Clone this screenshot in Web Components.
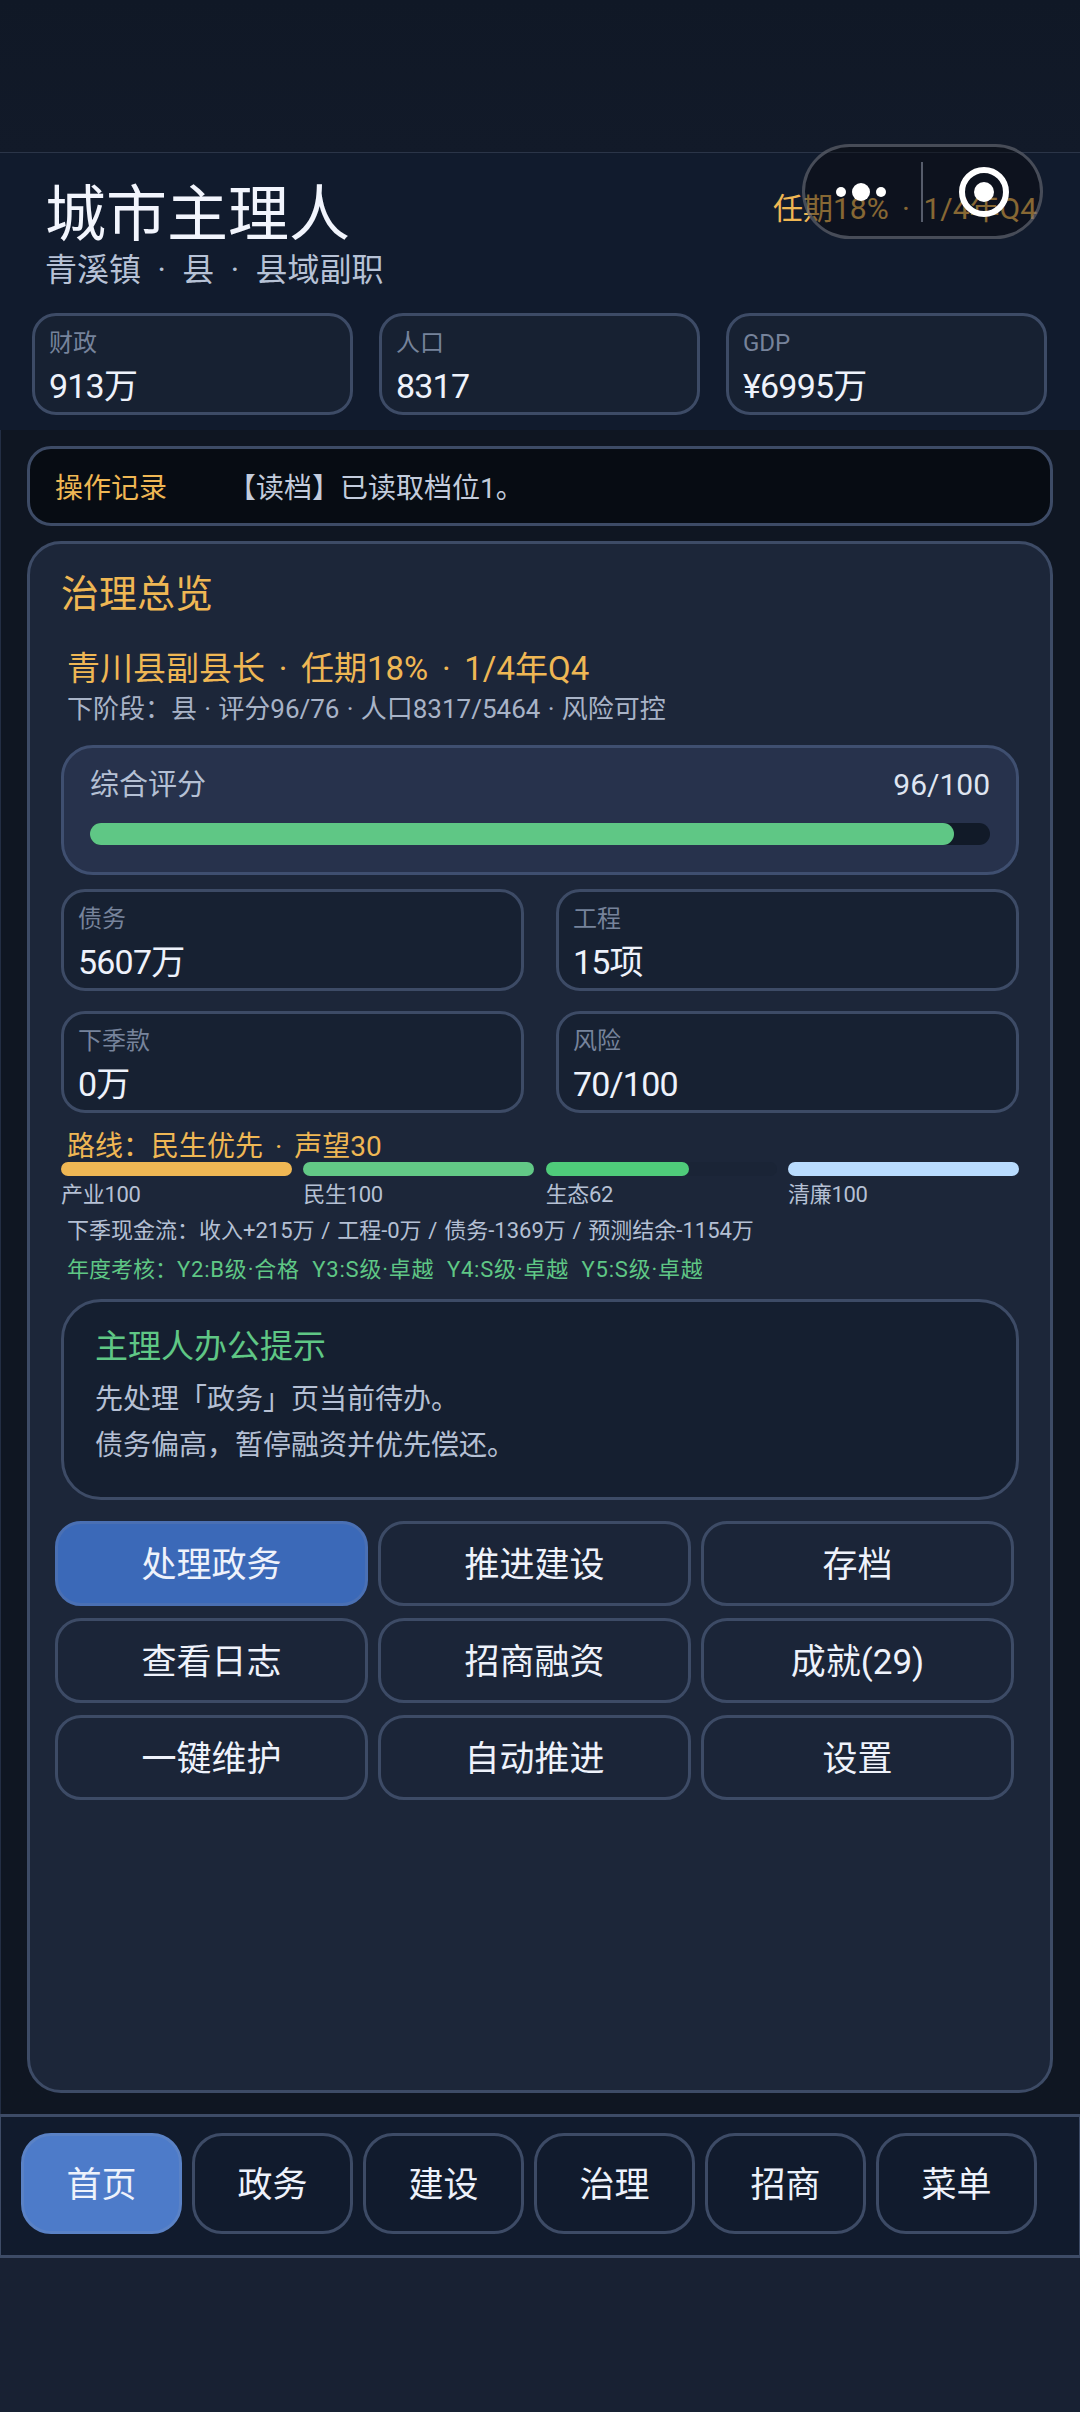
<!DOCTYPE html>
<html lang="zh">
<head>
<meta charset="utf-8">
<title>城市主理人</title>
<style>
  html, body { margin: 0; padding: 0; }
  body {
    width: 1080px;
    height: 2412px;
    display: flex;
    flex-direction: column;
    overflow: hidden;
    background: #182133;
    color: #eef2fb;
    font-family: Roboto, "Noto Sans CJK SC", sans-serif;
  }
</style>
</head>
<body>
<city-app></city-app>
<script>
  // small base class: every element just renders its css + markup into an open shadow root
  class Base extends HTMLElement {
    constructor() {
      super()
      this.attachShadow({ mode: 'open' })
      const template = document.createElement('template')
      template.innerHTML = `<style>${this.constructor.css}</style>${this.render()}`
      this.shadowRoot.appendChild(template.content.cloneNode(true))
    }
    render() { return '<slot></slot>' }
    attr(name) { return this.getAttribute(name) || '' }
  }

  customElements.define('stat-card', class extends Base {
    static css = `
      :host {
        display: block;
        box-sizing: border-box;
        height: 102px;
        padding: 12px 13px 0 14px;
        border: 3px solid #3d4b66;
        border-radius: 24px;
        background: #172132;
      }
      .label { font-size: 24px; line-height: 30px; color: #76839b; }
      .value { margin-top: 8px; font-size: 34px; line-height: 40px; color: #eef2fb; letter-spacing: -.8px; }
    `
    render() {
      return `<div class="label">${this.attr('label')}</div><div class="value">${this.attr('value')}</div>`
    }
  })

  customElements.define('capsule-menu', class extends Base {
    static css = `
      :host {
        position: absolute;
        top: 144px;
        left: 802px;
        box-sizing: border-box;
        width: 241px;
        height: 95px;
        display: flex;
        align-items: center;
        border: 3px solid rgba(130, 134, 146, .5);
        border-radius: 48px;
        background: rgba(8, 8, 14, .45);
      }
      svg { display: block; }
    `
    render() {
      return `<svg width="235" height="89" viewBox="0 0 235 89">
        <circle cx="36" cy="45" r="5" fill="#fff"/>
        <circle cx="56" cy="45" r="9" fill="#fff"/>
        <circle cx="76" cy="45" r="5" fill="#fff"/>
        <rect x="116" y="15" width="2" height="60" fill="#565c6b"/>
        <circle cx="179" cy="45" r="22" fill="none" stroke="#fff" stroke-width="6"/>
        <circle cx="179" cy="45" r="10" fill="#fff"/>
      </svg>`
    }
  })

  customElements.define('app-header', class extends Base {
    static css = `
      :host {
        display: block;
        box-sizing: border-box;
        height: 278px;
        padding: 32px 32px 0;
        border-top: 1px solid #2b3548;
        background: #111b2d;
      }
      .top { display: flex; justify-content: space-between; align-items: flex-start; padding: 0 11px 0 13px; }
      h1 { margin: 0; font-size: 61px; line-height: 60px; font-weight: 400; color: #f2f5fd; }
      .sub { margin-top: 7px; font-size: 32px; line-height: 36px; color: #b7c2d6; word-spacing: 8.5px; }
      .term { margin-top: 4px; font-size: 30px; line-height: 40px; color: #efb754; word-spacing: 6px; }
      .stats { display: grid; grid-template-columns: repeat(3, 321px); gap: 26px; margin-top: 25px; }
    `
    render() {
      return `
        <div class="top">
          <div>
            <h1>城市主理人</h1>
            <div class="sub">青溪镇 · 县 · 县域副职</div>
          </div>
          <div class="term">任期18% · 1/4年Q4</div>
        </div>
        <div class="stats">
          <stat-card label="财政" value="913万"></stat-card>
          <stat-card label="人口" value="8317"></stat-card>
          <stat-card label="GDP" value="¥6995万"></stat-card>
        </div>`
    }
  })

  customElements.define('log-bar', class extends Base {
    static css = `
      :host {
        display: flex;
        align-items: center;
        box-sizing: border-box;
        height: 80px;
        padding-left: 25px;
        border: 3px solid #3d4b66;
        border-radius: 24px;
        background: #070c13;
        font-size: 28px;
      }
      .label { width: 173px; color: #efb754; }
      .msg { color: #c3ccdc; }
    `
    render() {
      return `<span class="label">操作记录</span><span class="msg">【读档】已读取档位1。</span>`
    }
  })

  customElements.define('score-box', class extends Base {
    static css = `
      :host {
        display: block;
        box-sizing: border-box;
        height: 130px;
        padding: 19px 26px 0 26px;
        border: 3px solid #3f4f70;
        border-radius: 32px;
        background: #27324c;
      }
      .row { display: flex; justify-content: space-between; font-size: 29px; line-height: 36px; color: #b5c0d4; }
      .num { color: #dfe5f1; font-size: 30px; }
      .track { margin-top: 20px; height: 22px; border-radius: 11px; background: #111a28; }
      .fill { width: 96%; height: 100%; border-radius: 11px; background: #5fc785; }
    `
    render() {
      return `
        <div class="row"><span>综合评分</span><span class="num">96/100</span></div>
        <div class="track"><div class="fill"></div></div>`
    }
  })

  customElements.define('meter-bar', class extends Base {
    static css = `
      :host { display: block; }
      .track { height: 14px; border-radius: 7px; background: #1a2436; }
      .fill { height: 100%; border-radius: 7px; }
      .label { margin-top: 6px; font-size: 22px; line-height: 26px; color: #b5c0d4; letter-spacing: -.3px; }
    `
    render() {
      return `
        <div class="track"><div class="fill" style="width:${this.attr('pct')}%;background:${this.attr('color')}"></div></div>
        <div class="label">${this.attr('label')}</div>`
    }
  })

  customElements.define('hint-box', class extends Base {
    static css = `
      :host {
        display: block;
        box-sizing: border-box;
        height: 201px;
        padding: 25px 31px 0;
        border: 3px solid #3d4b66;
        border-radius: 40px;
        background: #151f30;
      }
      h3 { margin: 0 0 10px; font-size: 33px; line-height: 40px; font-weight: 400; color: #5fc785; }
      p { margin: 0; font-size: 28px; line-height: 46px; color: #b5c0d4; }
    `
    render() {
      return `<h3>主理人办公提示</h3><p>先处理「政务」页当前待办。</p><p>债务偏高，暂停融资并优先偿还。</p>`
    }
  })

  customElements.define('action-button', class extends Base {
    static css = `
      :host {
        display: flex;
        align-items: center;
        justify-content: center;
        box-sizing: border-box;
        height: var(--btn-height, 85px);
        padding-bottom: 5px;
        border: 3px solid #3d4b66;
        border-radius: var(--btn-radius, 26px);
        background: var(--btn-bg, #1b2538);
        font-size: 35px;
        color: #eef2fb;
      }
      :host([primary]) { background: var(--btn-active, #3b69b8); border-color: var(--btn-active-border, #4a70b4); }
    `
  })

  customElements.define('overview-panel', class extends Base {
    static css = `
      :host {
        display: block;
        flex: 1;
        box-sizing: border-box;
        padding: 28px 31px 0;
        border: 3px solid #3d4b66;
        border-radius: 34px;
        background: #1c2639;
      }
      h2 { margin: 0; font-size: 38px; line-height: 44px; font-weight: 400; color: #efb754; }
      .role { margin-top: 33px; padding-left: 6px; font-size: 33px; line-height: 40px; color: #efb754; word-spacing: 5.5px; }
      .next { margin-top: 4px; padding-left: 6px; font-size: 26px; line-height: 32px; color: #a8b3c7; word-spacing: .8px; }
      score-box { margin-top: 20px; }
      .stats { display: grid; grid-template-columns: 1fr 1fr; gap: 20px 32px; margin-top: 14px; }
      .route { margin-top: 19px; padding-left: 6px; font-size: 28px; line-height: 30px; color: #efb754; word-spacing: 5px; }
      .meters { display: grid; grid-template-columns: repeat(4, 231px); justify-content: space-between; }
      .flow { margin-top: 8px; padding-left: 6px; font-size: 22px; line-height: 30px; color: #b5c0d4; word-spacing: 1.3px; white-space: nowrap; }
      .year { margin-top: 9px; padding-left: 6px; font-size: 22px; line-height: 30px; color: #5fc785; white-space: nowrap; }
      .year span { letter-spacing: .8px; }
      hint-box { margin-top: 14px; }
      .actions { display: grid; grid-template-columns: repeat(3, 313px); gap: 12px 10px; margin: 21px 0 0 -6px; }
    `
    render() {
      const actions = ['处理政务', '推进建设', '存档', '查看日志', '招商融资', '成就(29)', '一键维护', '自动推进', '设置']
      return `
        <h2>治理总览</h2>
        <div class="role">青川县副县长 · 任期18% · 1/4年Q4</div>
        <div class="next">下阶段：县 · 评分96/76 · 人口8317/5464 · 风险可控</div>
        <score-box></score-box>
        <div class="stats">
          <stat-card label="债务" value="5607万"></stat-card>
          <stat-card label="工程" value="15项"></stat-card>
          <stat-card label="下季款" value="0万"></stat-card>
          <stat-card label="风险" value="70/100"></stat-card>
        </div>
        <div class="route">路线：民生优先 · 声望30</div>
        <div class="meters">
          <meter-bar label="产业100" pct="100" color="#efb754"></meter-bar>
          <meter-bar label="民生100" pct="100" color="#62c886"></meter-bar>
          <meter-bar label="生态62" pct="62" color="#4fcb7a"></meter-bar>
          <meter-bar label="清廉100" pct="100" color="#b9dcff"></meter-bar>
        </div>
        <div class="flow">下季现金流：收入+215万 / 工程-0万 / 债务-1369万 / 预测结余-1154万</div>
        <div class="year">年度考核：<span>Y2:B级·合格&nbsp; Y3:S级·卓越&nbsp; Y4:S级·卓越&nbsp; Y5:S级·卓越</span></div>
        <hint-box></hint-box>
        <div class="actions">
          ${actions.map((a, i) => `<action-button${i === 0 ? ' primary' : ''}>${a}</action-button>`).join('')}
        </div>`
    }
  })

  customElements.define('bottom-nav', class extends Base {
    static css = `
      :host {
        display: grid;
        grid-template-columns: repeat(6, 161px);
        gap: 10px;
        box-sizing: border-box;
        height: 144px;
        padding: 16px 0 0 20px;
        border: 3px solid #3d4b66;
        border-width: 3px 1px;
        background: #111b2d;
        --btn-height: 101px;
        --btn-radius: 30px;
        --btn-bg: #111b2d;
        --btn-active: #4d7bc9;
        --btn-active-border: #5a82c6;
      }
    `
    render() {
      const tabs = ['首页', '政务', '建设', '治理', '招商', '菜单']
      return tabs.map((t, i) => `<action-button${i === 0 ? ' primary' : ''}>${t}</action-button>`).join('')
    }
  })

  customElements.define('city-app', class extends Base {
    static css = `
      :host { display: flex; flex-direction: column; height: 2412px; position: relative; }
      .status { height: 152px; background: linear-gradient(#101826, #121a29); }
      main {
        display: flex;
        flex-direction: column;
        gap: 15px;
        box-sizing: border-box;
        height: 1684px;
        padding: 16px 27px 21px 26px;
        border-left: 1px solid #232e44;
        background: #0f1622;
      }
      .foot { flex: 1; background: #182133; }
    `
    render() {
      return `
        <div class="status"></div>
        <app-header></app-header>
        <main>
          <log-bar></log-bar>
          <overview-panel></overview-panel>
        </main>
        <bottom-nav></bottom-nav>
        <div class="foot"></div>
        <capsule-menu></capsule-menu>`
    }
  })
</script>
</body>
</html>
